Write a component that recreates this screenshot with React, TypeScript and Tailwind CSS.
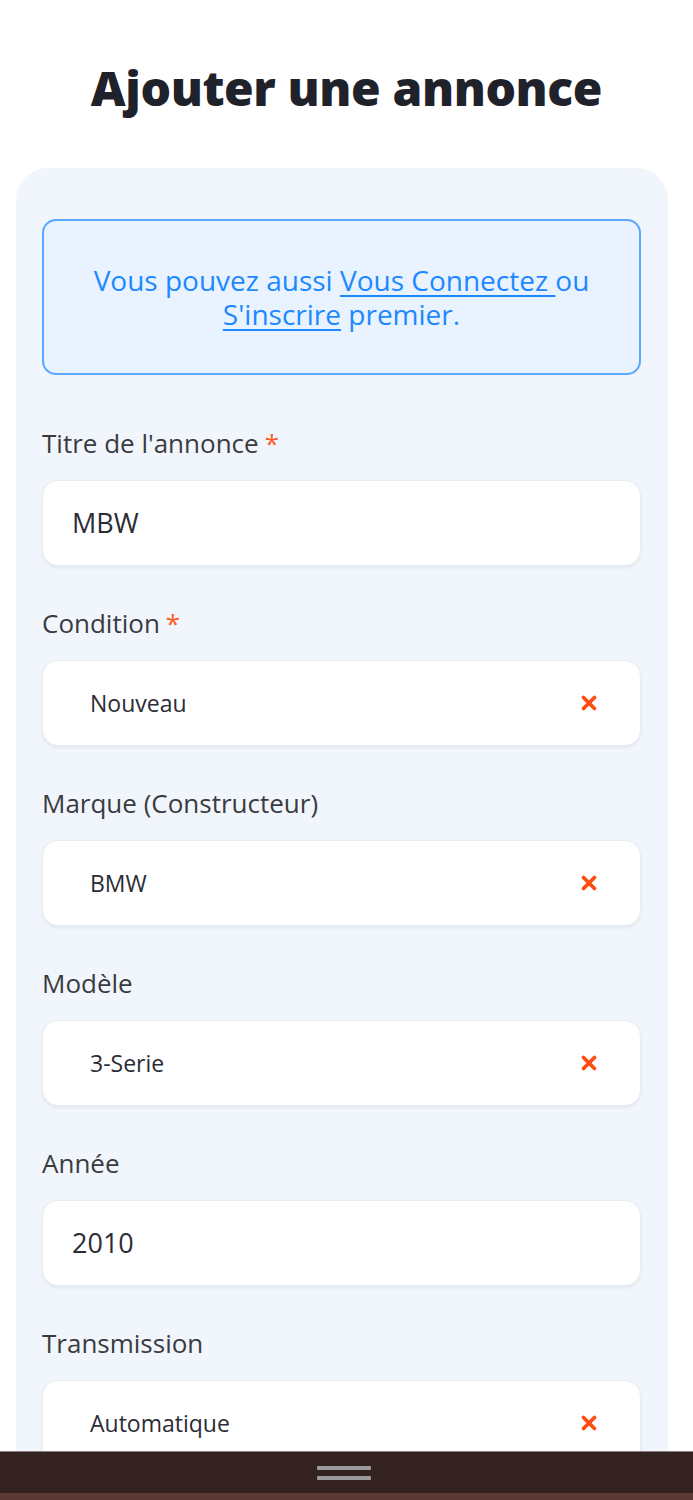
import React from 'react';

type Field = { label: string; value: string; required?: boolean; select?: boolean };

const fields: Field[] = [
  { label: "Titre de l'annonce", value: 'MBW', required: true },
  { label: 'Condition', value: 'Nouveau', required: true, select: true },
  { label: 'Marque (Constructeur)', value: 'BMW', select: true },
  { label: 'Modèle', value: '3-Serie', select: true },
  { label: 'Année', value: '2010' },
  { label: 'Transmission', value: 'Automatique', select: true },
];

const ClearIcon = () => (
  <svg width="18" height="18" viewBox="0 0 18 18" className="shrink-0">
    <path d="M3.5 3.5 L14.5 14.5 M14.5 3.5 L3.5 14.5" stroke="#ff4d12" strokeWidth="3.8" strokeLinecap="round" />
  </svg>
);

const FormField = ({ field }: { field: Field }) => (
  <div className="flex flex-col">
    <label className="text-[26px] leading-[32px] text-[#3b3b3f] mb-[21px]">
      {field.label}
      {field.required && <span className="text-[#ff5a1f] ml-[6px]">*</span>}
    </label>
    {field.select ? (
      <div className="h-[86px] bg-white rounded-[16px] shadow-[0_2px_3px_rgba(0,0,0,0.06)] border border-[#e9edf3] flex items-center justify-between pl-[47px] pr-[42px]">
        <span className="text-[23px] text-[#2c2c34]">{field.value}</span>
        <ClearIcon />
      </div>
    ) : (
      <div className="h-[86px] bg-white rounded-[16px] shadow-[0_2px_3px_rgba(0,0,0,0.06)] border border-[#e9edf3] flex items-center pl-[29px]">
        <span className="text-[27px] text-[#2c2c34]">{field.value}</span>
      </div>
    )}
  </div>
);

export default function App() {
  return (
    <div className="h-[1500px] overflow-hidden bg-white relative" style={{ fontFamily: '"Open Sans", Lato, sans-serif' }}>
      {/* Header */}
      <h1 className="text-center text-[48px] font-extrabold text-[#1f222b] pt-[56px] leading-[64px] tracking-[-0.4px]">
        Ajouter une annonce
      </h1>

      {/* Form card */}
      <div className="ml-[16px] w-[652px] mt-[48px] bg-[#f1f5fc] rounded-[32px] pl-[26px] pr-[27px] pt-[51px] pb-[40px]">
        <div className="border-2 border-[#5aa8ff] bg-[#e8f3ff] rounded-[14px] h-[156px] flex items-center justify-center px-[16px] text-center">
          <p className="text-[28px] leading-[34px] text-[#1e88ff]">
            Vous pouvez aussi <span className="underline underline-offset-[4px]">Vous Connectez </span>ou
            <br />
            <span className="underline underline-offset-[4px]">S'inscrire</span> premier.
          </p>
        </div>

        <div className="flex flex-col gap-[41px] mt-[52px]">
          {fields.map((f) => (
            <FormField key={f.label} field={f} />
          ))}
        </div>
      </div>

      {/* Bottom nav handle */}
      <div className="absolute left-0 right-0 bottom-0 h-[49px] bg-[#33221f] border-t border-[#8a7f7d] flex flex-col">
        <div className="flex-1 flex flex-col items-center justify-center gap-[6px]">
          <div className="w-[54px] h-[4px] bg-[#9a9a9a] rounded-[1px] -translate-x-[3px]" />
          <div className="w-[54px] h-[4px] bg-[#9a9a9a] rounded-[1px] -translate-x-[3px]" />
        </div>
        <div className="h-[7px] bg-[#5b3a35]" />
      </div>
    </div>
  );
}
